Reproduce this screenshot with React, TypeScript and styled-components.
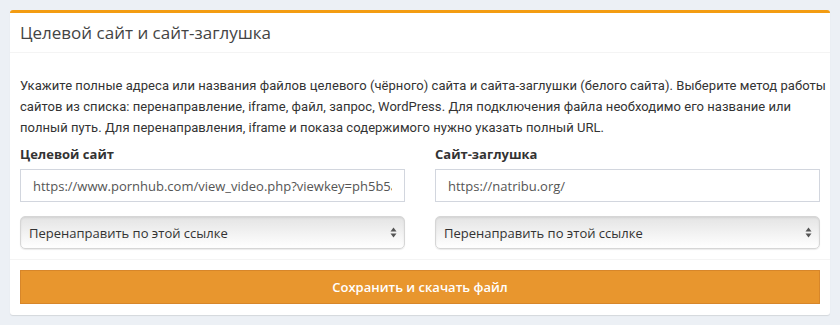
import styled, { createGlobalStyle } from "styled-components";

const GlobalStyle = createGlobalStyle`
  html, body {
    margin: 0;
    padding: 0;
    background: #ecf0f5;
  }
  body {
    font-family: "Open Sans", "Noto Sans", "Liberation Sans", sans-serif;
    color: #333;
  }
`;

const Page = styled.div`
  padding: 10px;
`;

const Card = styled.section`
  background: #fff;
  border-top: 3px solid #f39c12;
  border-radius: 3px;
  box-shadow: 0 1px 1px rgba(0, 0, 0, 0.1);
`;

const CardHeader = styled.header`
  height: 39px;
  display: flex;
  align-items: center;
  padding: 0 10px;
  border-bottom: 1px solid #f4f4f4;
`;

const Title = styled.h3`
  margin: 0;
  font-size: 17px;
  font-weight: 400;
  color: #444;
`;

const CardBody = styled.div`
  padding: 10px;
`;

const Hint = styled.p`
  margin: 12px 0 0;
  font-family: Roboto, "Open Sans", sans-serif;
  font-size: 13px;
  letter-spacing: 0.05px;
  line-height: 21px;
  color: #333;
  white-space: nowrap;
`;

const Columns = styled.div`
  display: grid;
  grid-template-columns: 1fr 1fr;
  column-gap: 30px;
  margin-top: 7px;
`;

const Field = styled.div`
  display: flex;
  flex-direction: column;
`;

const Label = styled.label`
  font-size: 13px;
  font-weight: 700;
  color: #333;
  line-height: 19px;
  margin-bottom: 5px;
`;

const Input = styled.input`
  box-sizing: border-box;
  height: 33px;
  width: 100%;
  border: 1px solid #d2d6de;
  border-radius: 0;
  padding: 0 12px;
  font-family: inherit;
  font-size: 13px;
  color: #555;
  outline: none;
`;

const SelectWrap = styled.div`
  position: relative;
  margin-top: 14px;
`;

const Select = styled.select`
  appearance: none;
  box-sizing: border-box;
  width: 100%;
  height: 33px;
  border: 1px solid #d6d6d6;
  border-radius: 5px;
  padding: 0 24px 0 8px;
  font-family: inherit;
  font-size: 13px;
  color: #333;
  background: linear-gradient(#e4e4e4, #ffffff);
  box-shadow: inset 0 1px 2px rgba(0, 0, 0, 0.08), 0 1px 1px rgba(0, 0, 0, 0.08);
  outline: none;
`;

const Arrows = styled.svg`
  position: absolute;
  right: 8px;
  top: 11px;
  pointer-events: none;
`;

const CardFooter = styled.footer`
  border-top: 1px solid #f4f4f4;
  padding: 10px 10px 11px;
`;

const SaveButton = styled.button`
  width: 100%;
  height: 34px;
  border: 1px solid #d7862a;
  border-radius: 0;
  background: #e8962e;
  color: #fff;
  font-family: inherit;
  font-size: 13px;
  font-weight: 600;
  cursor: pointer;
`;

const SelectField = ({ value }: { value: string }) => (
  <SelectWrap>
    <Select defaultValue={value}>
      <option>Перенаправить по этой ссылке</option>
      <option>Показать во фрейме</option>
      <option>Подключить файл</option>
    </Select>
    <Arrows width="7" height="11" viewBox="0 0 7 11">
      <path d="M3.5 0.5 L6.5 4.5 H0.5 Z" fill="#555" />
      <path d="M3.5 10.5 L6.5 6.5 H0.5 Z" fill="#555" />
    </Arrows>
  </SelectWrap>
);

export default function App() {
  return (
    <>
      <GlobalStyle />
      <Page>
        <Card>
          <CardHeader>
            <Title>Целевой сайт и сайт-заглушка</Title>
          </CardHeader>
          <CardBody>
            <Hint>
              Укажите полные адреса или названия файлов целевого (чёрного) сайта и сайта-заглушки (белого сайта). Выберите метод работы
              <br />
              сайтов из списка: перенаправление, iframe, файл, запрос, WordPress. Для подключения файла необходимо его название или
              <br />
              полный путь. Для перенаправления, iframe и показа содержимого нужно указать полный URL.
            </Hint>
            <Columns>
              <Field>
                <Label>Целевой сайт</Label>
                <Input defaultValue="https://www.pornhub.com/view_video.php?viewkey=ph5b5a0c2e1f3a7" />
                <SelectField value="Перенаправить по этой ссылке" />
              </Field>
              <Field>
                <Label>Сайт-заглушка</Label>
                <Input defaultValue="https://natribu.org/" />
                <SelectField value="Перенаправить по этой ссылке" />
              </Field>
            </Columns>
          </CardBody>
          <CardFooter>
            <SaveButton>Сохранить и скачать файл</SaveButton>
          </CardFooter>
        </Card>
      </Page>
    </>
  );
}
